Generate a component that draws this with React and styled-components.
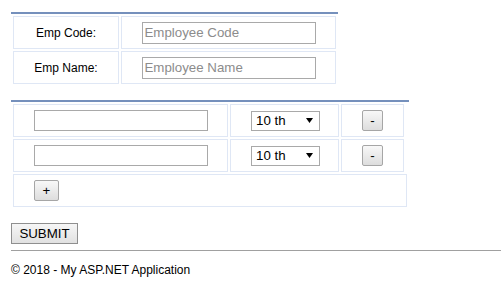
import React from "react";
import styled, { createGlobalStyle } from "styled-components";

const Global = createGlobalStyle`
  html, body { margin: 0; padding: 0; background: #fff; }
  body { font-family: "Liberation Sans", Arial, sans-serif; color: #000; overflow: hidden; }
  * { box-sizing: border-box; }
`;

const Page = styled.div`
  padding: 12px 0 0 11px;
`;

const Table = styled.div`
  width: ${(p) => p.$width}px;
  border-top: 2px solid #7590bc;
  padding: 2px;
  display: grid;
  grid-template-columns: ${(p) => p.$cols};
  grid-auto-rows: 33px;
  column-gap: 2px;
  row-gap: 2px;
  margin-bottom: ${(p) => p.$mb || 0}px;
`;

const Cell = styled.div`
  border: 1px solid #dfe7f5;
  display: flex;
  align-items: center;
  justify-content: ${(p) => (p.$start ? "flex-start" : "center")};
  padding-left: ${(p) => (p.$start ? 20 : 0)}px;
  grid-column: ${(p) => p.$span || "auto"};
  font-size: 12px;
`;

const TextInput = styled.input`
  width: ${(p) => p.$w}px;
  height: ${(p) => p.$h}px;
  border: 1px solid #a9a9a9;
  padding: 0 2px;
  margin: 0;
  font-family: "Liberation Sans", Arial, sans-serif;
  font-size: 13.3px;
  outline: none;
  &::placeholder { color: #8c8c8c; opacity: 1; }
`;

const SelectWrap = styled.div`
  position: relative;
  width: 69px;
  height: 20px;
  margin-left: 2px;
`;

const Select = styled.select`
  appearance: none;
  -webkit-appearance: none;
  width: 100%;
  height: 100%;
  border: 1px solid #a9a9a9;
  border-radius: 0;
  background: #fff;
  padding: 0 0 0 4px;
  margin: 0;
  font-family: "Liberation Sans", Arial, sans-serif;
  font-size: 13.3px;
  color: #000;
  outline: none;
`;

const Arrow = styled.svg`
  position: absolute;
  right: 7px;
  top: 7px;
  pointer-events: none;
`;

const Button = styled.button`
  width: ${(p) => p.$w}px;
  height: 21px;
  margin: 0;
  padding: 0;
  border: 1px solid #a6a6a6;
  border-radius: 2px;
  background: linear-gradient(#f8f8f8, #dddddd);
  font-family: "Liberation Sans", Arial, sans-serif;
  font-size: 13.3px;
  color: #000;
  line-height: 19px;
`;

const Submit = styled(Button)`
  margin-top: 14px;
  display: block;
  border-radius: 0;
  border-color: #8f8f8f;
  background: linear-gradient(#f6f6f6, #e1e1e1);
`;

const Rule = styled.hr`
  margin: 6px 0 0 0;
  border: 0;
  border-top: 1px solid #a0a0a0;
  height: 0;
`;

const Footer = styled.p`
  margin: 12px 0 0 0;
  font-size: 12px;
  line-height: 14px;
`;

function Dropdown() {
  return (
    <SelectWrap>
      <Select defaultValue="10">
        <option value="10">10 th</option>
        <option value="12">12 th</option>
      </Select>
      <Arrow width="7" height="5" viewBox="0 0 7 5">
        <path d="M0 0 H7 L3.5 5 Z" fill="#000" />
      </Arrow>
    </SelectWrap>
  );
}

function QualRow() {
  return (
    <>
      <Cell>
        <TextInput $w={174} $h={21} />
      </Cell>
      <Cell>
        <Dropdown />
      </Cell>
      <Cell>
        <Button $w={21}>-</Button>
      </Cell>
      <div />
    </>
  );
}

export default function App() {
  return (
    <>
      <Global />
      <Page>
        <Table $width={327} $cols="106px 215px" $mb={14}>
          <Cell>Emp Code:</Cell>
          <Cell>
            <TextInput $w={174} $h={22} placeholder="Employee Code" />
          </Cell>
          <Cell>Emp Name:</Cell>
          <Cell>
            <TextInput $w={174} $h={22} placeholder="Employee Name" />
          </Cell>
        </Table>
        <Table $width={398} $cols="215px 109px 63px 1px">
          <QualRow />
          <QualRow />
          <Cell $start $span="1 / -1">
            <Button $w={25}>+</Button>
          </Cell>
        </Table>
        <Submit $w={67}>SUBMIT</Submit>
        <Rule />
        <Footer>© 2018 - My ASP.NET Application</Footer>
      </Page>
    </>
  );
}
